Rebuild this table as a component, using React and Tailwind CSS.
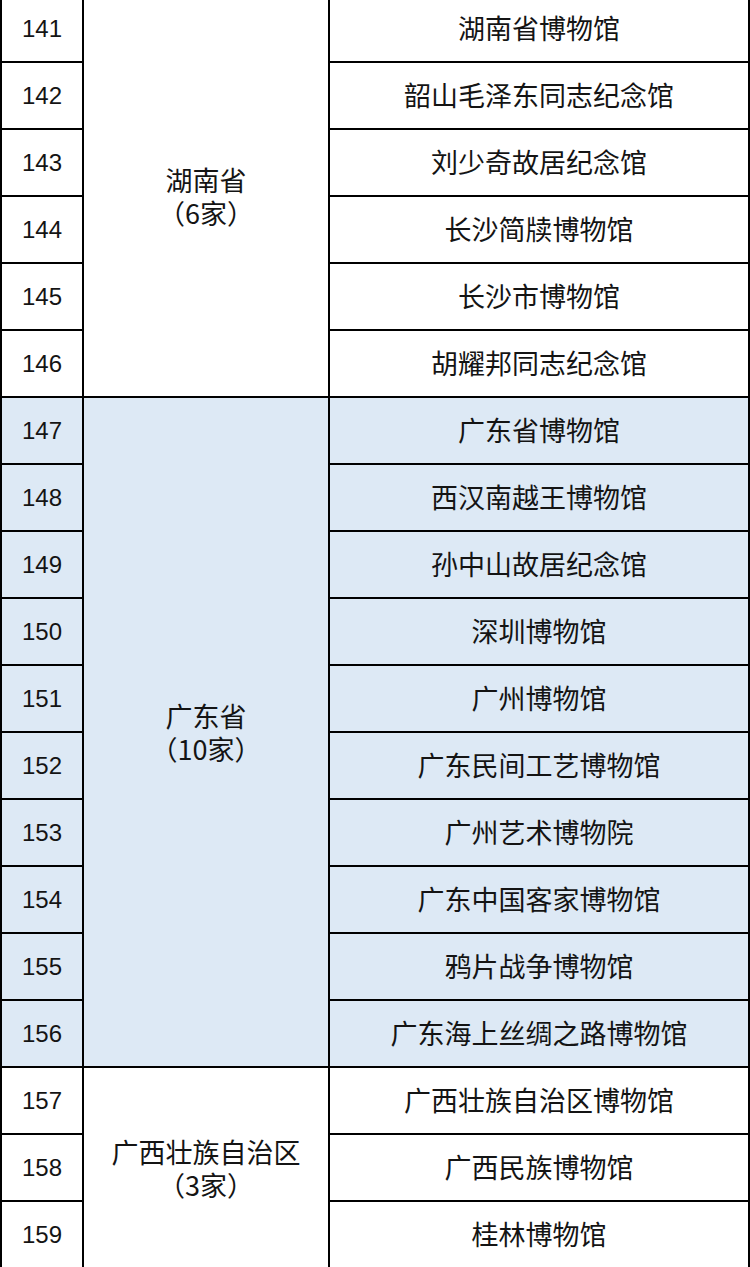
const groups = [
  {
    name: "湖南省",
    count: "（6家）",
    blue: false,
    items: [
      ["141", "湖南省博物馆"],
      ["142", "韶山毛泽东同志纪念馆"],
      ["143", "刘少奇故居纪念馆"],
      ["144", "长沙简牍博物馆"],
      ["145", "长沙市博物馆"],
      ["146", "胡耀邦同志纪念馆"],
    ],
  },
  {
    name: "广东省",
    count: "（10家）",
    blue: true,
    items: [
      ["147", "广东省博物馆"],
      ["148", "西汉南越王博物馆"],
      ["149", "孙中山故居纪念馆"],
      ["150", "深圳博物馆"],
      ["151", "广州博物馆"],
      ["152", "广东民间工艺博物馆"],
      ["153", "广州艺术博物院"],
      ["154", "广东中国客家博物馆"],
      ["155", "鸦片战争博物馆"],
      ["156", "广东海上丝绸之路博物馆"],
    ],
  },
  {
    name: "广西壮族自治区",
    count: "（3家）",
    blue: false,
    items: [
      ["157", "广西壮族自治区博物馆"],
      ["158", "广西民族博物馆"],
      ["159", "桂林博物馆"],
    ],
  },
];

const spans = { 6: "row-span-6", 10: "row-span-10", 3: "row-span-3" };

export default function App() {
  return (
    <div className="w-[750px] h-[1267px] overflow-hidden bg-white">
      <div className="-mt-[4px] grid grid-cols-[80px_244px_418px] auto-rows-[65px] gap-[2px] bg-black px-[2px] text-[#141414] font-[family-name:'Noto_Sans_CJK_SC','Noto_Sans',sans-serif]">
        {groups.map((g) =>
          g.items.map(([num, title], i) => {
            const bg = g.blue ? "bg-[#dde9f5]" : "bg-white";
            return [
              <div
                key={num + "n"}
                className={`${bg} col-start-1 flex items-center justify-center text-[24px] font-[family-name:'Liberation_Sans',Arial,sans-serif]`}
              >
                {num}
              </div>,
              i === 0 ? (
                <div
                  key={num + "p"}
                  className={`${bg} ${spans[g.items.length]} col-start-2 flex items-center justify-center text-center text-[27px] leading-[33px]`}
                >
                  <p>
                    {g.name}
                    <br />
                    {g.count}
                  </p>
                </div>
              ) : null,
              <div
                key={num + "t"}
                className={`${bg} col-start-3 flex items-center justify-center text-[27px]`}
              >
                {title}
              </div>,
            ];
          })
        )}
      </div>
    </div>
  );
}
